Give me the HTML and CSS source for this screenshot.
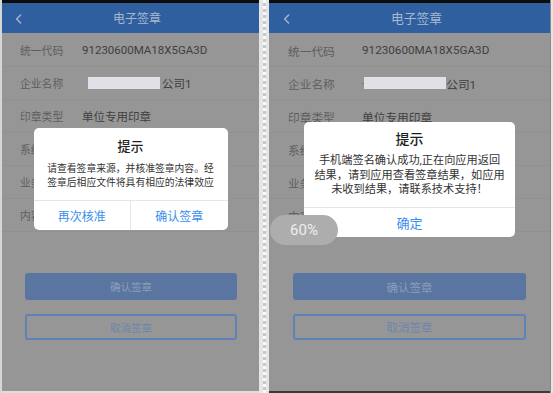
FILE: index.html
```html
<!DOCTYPE html>
<html lang="zh-CN">
<head>
<meta charset="utf-8">
<title>电子签章</title>
<link rel="stylesheet" href="styles.css">
</head>
<body>
<div class="canvas">
  <div class="edge edge-left"></div>

  <section class="phone phone-a">
    <div class="statusbar"></div>
    <header class="appbar">
      <svg class="back" viewBox="0 0 7 10" width="7" height="10"><polyline points="5.6,1 1.6,5 5.6,9"/></svg>
      <h1 class="title">电子签章</h1>
      <span></span>
    </header>
    <div class="rows">
      <div class="row"><span class="label">统一代码</span><span class="value">91230600MA18X5GA3D</span></div>
      <div class="row"><span class="label">企业名称</span><span class="value"><span class="redact"></span>公司1</span></div>
      <div class="row"><span class="label">印章类型</span><span class="value">单位专用印章</span></div>
      <div class="row"><span class="label">系统名称</span><span class="value">浙江签章系统（测试）</span></div>
      <div class="row"><span class="label">业务名称</span><span class="value">签章测试</span></div>
      <div class="row"><span class="label">内容说明</span><span class="value">签名</span></div>
    </div>
    <div class="actions">
      <button class="btn btn-primary">确认签章</button>
      <button class="btn btn-outline">取消签章</button>
    </div>

    <div class="dialog">
      <div class="dlg-title">提示</div>
      <div class="dlg-msg">请查看签章来源，并核准签章内容。经签章后相应文件将具有相应的法律效应</div>
      <div class="dlg-btns">
        <button class="dlg-btn">再次核准</button>
        <button class="dlg-btn">确认签章</button>
      </div>
    </div>
  </section>

  <div class="divider"><div class="checker"></div></div>

  <section class="phone phone-b">
    <div class="statusbar"></div>
    <header class="appbar">
      <svg class="back" viewBox="0 0 7 10" width="7" height="10"><polyline points="5.6,1 1.6,5 5.6,9"/></svg>
      <h1 class="title">电子签章</h1>
      <span></span>
    </header>
    <div class="rows">
      <div class="row"><span class="label">统一代码</span><span class="value">91230600MA18X5GA3D</span></div>
      <div class="row"><span class="label">企业名称</span><span class="value"><span class="dash">-</span><span class="redact"></span>公司1</span></div>
      <div class="row"><span class="label">印章类型</span><span class="value">单位专用印章</span></div>
      <div class="row"><span class="label">系统名称</span><span class="value">浙江签章系统（测试）</span></div>
      <div class="row"><span class="label">业务名称</span><span class="value">签章测试</span></div>
      <div class="row"><span class="label">内容说明</span><span class="value">签名</span></div>
    </div>
    <div class="actions">
      <button class="btn btn-primary">确认签章</button>
      <button class="btn btn-outline">取消签章</button>
    </div>
    <div class="bottombar"></div>

    <div class="dialog">
      <div class="dlg-title">提示</div>
      <div class="dlg-msg">手机端签名确认成功,正在向应用返回<br>结果，请到应用查看签章结果，如应用<br>未收到结果，请联系技术支持！</div>
      <div class="dlg-btns">
        <button class="dlg-btn">确定</button>
      </div>
    </div>

    <div class="toast">60%</div>
  </section>

  <div class="edge edge-right"></div>
</div>
</body>
</html>
```

FILE: styles.css
```css
* { box-sizing: border-box; }

html, body {
  margin: 0;
  padding: 0;
  width: 553px;
  height: 393px;
  overflow: hidden;
  background: #dedede;
  font-family: Roboto, "Noto Sans CJK SC", sans-serif;
}

.canvas {
  display: flex;
  width: 553px;
  height: 393px;
}

.edge-left { width: 2px; background: #d6d6d6; }
.edge-right { width: 3px; background: #e4e4e4; border-left: 1px solid #8a8a8a; }

.divider {
  width: 10px;
  background: #e6e6e6;
  display: flex;
  justify-content: center;
  padding-left: 1px;
}
.checker {
  width: 3px;
  background: repeating-linear-gradient(to bottom, #fafafa 0 3px, #c8c8c8 3px 6px);
}

.phone {
  position: relative;
  background: #969696;
  display: flex;
  flex-direction: column;
  overflow: hidden;
}
.phone-a { width: 257px; height: 391px; }
.phone-b { width: 281px; height: 393px; }

.statusbar { height: 3px; background: #0c0c0c; flex: none; }

.appbar {
  height: 30px;
  flex: none;
  background: #2f5f9e;
  display: grid;
  grid-template-columns: 1fr auto 1fr;
  align-items: center;
  padding-left: 13px;
}
.phone-b .appbar { padding-left: 14px; }

.back {
  fill: none;
  stroke: #a6b8d3;
  stroke-width: 1.4;
  stroke-linecap: round;
  stroke-linejoin: round;
  margin-top: 1px;
}

.title {
  margin: 0;
  font-weight: 400;
  font-size: 12px;
  color: #a9b8cf;
  line-height: 16px;
  margin-top: 2px;
}
.phone-b .title { font-size: 12.8px; }

.rows { padding-top: 1px; flex: none; }

.row {
  height: 33px;
  display: flex;
  align-items: center;
  padding-left: 18px;
  border-bottom: 1px solid #919191;
}
.phone-b .row { padding-left: 19px; }

.label {
  width: 62px;
  flex: none;
  font-size: 10.8px;
  color: #5e5e5e;
}
.phone-b .label { width: 74px; font-size: 11.7px; }

.value {
  font-size: 11.5px;
  color: #3f3f3f;
  display: flex;
  align-items: center;
}
.phone-b .value { font-size: 11.7px; }

.redact {
  display: inline-block;
  width: 72px;
  height: 12px;
  background: #dfe1e6;
  margin-left: 6px;
  margin-right: 2px;
}
.phone-b .redact { width: 82px; margin-left: 0; margin-right: 0; }
.dash { color: #555; font-size: 8px; }

.actions {
  margin-top: 41px;
  padding: 0 22px 0 23px;
  display: flex;
  flex-direction: column;
  gap: 14px;
  flex: none;
}
.phone-b .actions { padding: 0 24px; }

.btn {
  font-family: Roboto, "Noto Sans CJK SC", sans-serif;
  font-size: 10.5px;
  border-radius: 3px;
  margin: 0;
  padding: 0;
  width: 100%;
}
.phone-b .btn { font-size: 11.5px; }

.btn-primary {
  height: 27px;
  background: #5a76a0;
  border: none;
  color: #8c9db9;
}
.btn-outline {
  height: 26px;
  background: transparent;
  border: 2px solid #5f82b9;
  color: #6c86ae;
}

.bottombar {
  margin-top: auto;
  height: 2px;
  background: #3a3a3a;
}

.dialog {
  position: absolute;
  left: 0;
  right: 0;
  margin: 0 auto;
  top: 128px;
  width: 194px;
  background: #fff;
  border-radius: 5px;
  text-align: center;
}
.phone-b .dialog { top: 122px; width: 211px; }

.dlg-title {
  font-size: 13px;
  font-weight: 500;
  color: #1f1f1f;
  line-height: 16px;
  padding-top: 11px;
}
.phone-b .dlg-title { font-size: 14px; padding-top: 9px; }

.dlg-msg {
  font-size: 9.8px;
  line-height: 14px;
  color: #333;
  padding: 7px 11px 10px;
}
.phone-b .dlg-msg {
  font-size: 11.2px;
  line-height: 14.5px;
  padding: 7px 4px 9.5px;
}

.dlg-btns {
  display: flex;
  border-top: 1px solid #e6e6e6;
  height: 30px;
}
.dlg-btn {
  flex: 1;
  border: none;
  background: transparent;
  font-family: Roboto, "Noto Sans CJK SC", sans-serif;
  font-size: 12px;
  color: #3b8eea;
  padding: 0;
  margin: 0;
}
.dlg-btn + .dlg-btn { border-left: 1px solid #e6e6e6; }
.phone-b .dlg-btn { font-size: 13px; }

.toast {
  position: absolute;
  z-index: 2;
  left: 1px;
  top: 215px;
  width: 68px;
  height: 30px;
  border-radius: 15px;
  background: #adadad;
  color: #eeeeee;
  font-size: 15px;
  line-height: 30px;
  text-align: center;
}
```
